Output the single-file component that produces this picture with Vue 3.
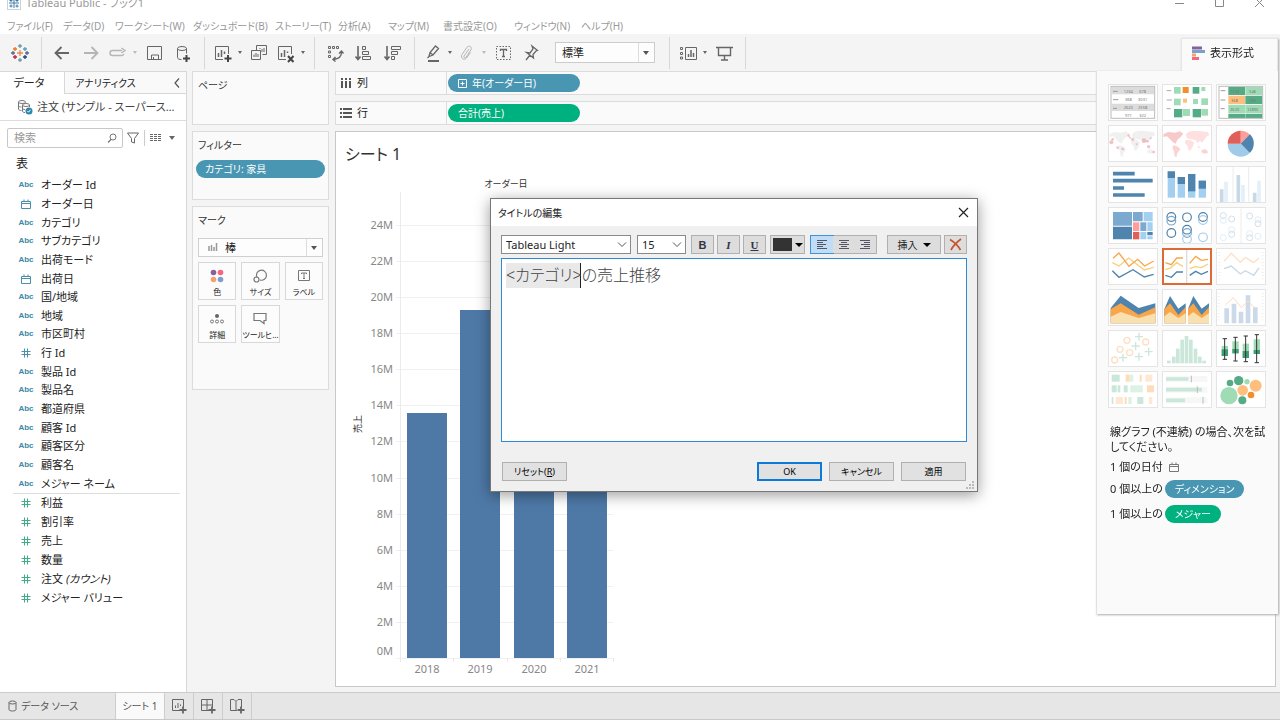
<script setup>
import { ref } from 'vue'

const menus = ['ファイル(F)', 'データ(D)', 'ワークシート(W)', 'ダッシュボード(B)', 'ストーリー(T)', '分析(A)', 'マップ(M)', '書式設定(O)', 'ウィンドウ(N)', 'ヘルプ(H)']

const dimensions = [
  ['abc', 'オーダー Id'], ['date', 'オーダー日'], ['abc', 'カテゴリ'], ['abc', 'サブカテゴリ'],
  ['abc', '出荷モード'], ['date', '出荷日'], ['abc', '国/地域'], ['abc', '地域'],
  ['abc', '市区町村'], ['num', '行 Id'], ['abc', '製品 Id'], ['abc', '製品名'],
  ['abc', '都道府県'], ['abc', '顧客 Id'], ['abc', '顧客区分'], ['abc', '顧客名'], ['abc', 'メジャー ネーム']
]
const measures = ['利益', '割引率', '売上', '数量', '注文 ', 'メジャー バリュー']

const sales = [
  { year: 2018, value: 13.6 },
  { year: 2019, value: 19.3 },
  { year: 2020, value: 19.6 },
  { year: 2021, value: 22.4 }
]
const baseY = 482
const perMillion = 18.05
const yOf = (m) => Math.round(baseY - m * perMillion)
const ticks = Array.from({ length: 13 }, (_, i) => i * 2)
const barX = (i) => Math.round(71 + i * 53.4)

const titleText = ref('<カテゴリ>の売上推移')

const tableRows = [['1234', '678'], ['368', '3031'], ['2620', '2558'], ['971', '322']]
const heatRows = [['1234', '546'], ['368', '385'], ['2620', '12890']]
const squares = [
  [36, 9, 20, 'l'], [62, 9, 18, 'o'], [92, 9, 20, 'd'], [118, 9, 12, 'l'],
  [36, 44, 20, 'l'], [63, 44, 12, 'p'], [93, 45, 15, 'l'], [118, 43, 20, 'l'],
  [36, 75, 25, 'd'], [63, 75, 21, 'l'], [92, 75, 25, 'd'], [118, 75, 20, 'l']
]
const green = { l: '#9fdbb5', d: '#56ab87', o: '#f28e2b', p: '#ffbe7d' }
const mapDots = [[10, 52, 6], [14, 43, 4], [29, 68, 4], [44, 72, 4], [62, 32, 4], [66, 38, 3], [74, 43, 5], [86, 58, 3], [108, 47, 7], [118, 49, 4], [122, 65, 5], [128, 40, 3], [137, 81, 4]]
const stacked = [[17, 16, 36], [47, 33, 54], [78, 24, 76], [110, 44, 68]]
const circles = [[28, 30, 'd'], [28, 41, 'm'], [75, 31, 'd'], [123, 30, 'd'], [123, 39, 'l'], [28, 78, 'd'], [75, 68, 'd'], [75, 78, 'm'], [75, 96, 'l'], [123, 91, 'l']]
const blue = { d: '#4e7fa6', m: '#7ba6cc', l: '#a3cdea' }
const paleCircles = [[22, 26], [22, 40], [47, 36], [47, 68], [47, 82], [22, 92], [101, 27], [126, 38], [126, 50], [101, 80], [101, 92], [126, 88]]
const histogram = [[15, 92], [30, 80], [42, 56], [55, 29], [68, 18], [81, 29], [95, 56], [108, 80], [121, 92]]
const boxes = [[26, 48, 58, 78, 26, 88], [58, 34, 57, 70, 22, 93], [89, 41, 63, 84, 18, 95], [122, 28, 60, 72, 14, 98]]
const gantt = [
  [11, 11, 24, 'g'], [53, 11, 12, 'o'], [66, 11, 10, 'e'], [95, 11, 6, 'o'], [112, 11, 21, 'p'],
  [11, 43, 15, 'g'], [29, 43, 8, 'g'], [47, 43, 12, 'g'], [67, 43, 37, 'e'], [117, 43, 21, 'o'],
  [11, 78, 5, 'g'], [23, 78, 22, 'p'], [50, 78, 6, 'o'], [61, 78, 10, 'e'], [88, 78, 18, 'g'], [123, 78, 10, 'p']
]
const pale = { g: '#cbe7da', e: '#dcf2e4', o: '#ffdcb8', p: '#ffe8d2' }
const bubbles = [[39, 74, 26, '#9fdbb5'], [42, 36, 10, '#56ab87'], [68, 29, 14, '#56ab87'], [93, 32, 8, '#9fdbb5'], [119, 44, 18, '#ffbe7d'], [80, 58, 16, '#ffbe7d'], [105, 72, 10, '#f28e2b'], [79, 88, 12, '#56ab87']]
const crosses = [[93, 20], [83, 48], [122, 65], [45, 83], [93, 80]]
const rings = [[57, 31], [113, 36], [36, 58], [65, 68], [20, 90]]
const logoPluses = [[12, 12, 3, '#eb8a44'], [12, 5, 2, '#7099a6'], [12, 19, 2, '#7199a6'], [5, 12, 2, '#5b6591'], [19, 12, 2, '#5b6591'], [7, 8, 2, '#e8762d'], [17, 8, 2, '#5c9dbd'], [7, 16, 2, '#c72035'], [17, 16, 2, '#1f457e']]
</script>

<template>
  <div class="window">
    <header class="titlebar">
      <div class="title-row">
        <svg class="app-icon" width="14" height="14" viewBox="0 0 14 14"><rect x=".5" y=".5" width="13" height="13" fill="#fff" stroke="#c9d3dc" /><path d="M7 2v10M2 7h10M4 3v3M10 3v3M4 8.500v3M10 8.500v3M2.500 4.500h3M8.500 4.500h3M2.500 10h3M8.500 10h3" stroke="#3f7aa8" /></svg>
        <span class="app-title">Tableau Public - ブック1</span>
        <span class="win-controls">
          <button aria-label="最小化"><svg width="12" height="12" viewBox="0 0 12 12"><path d="M1 6.500h9" /></svg></button>
          <button aria-label="最大化"><svg width="12" height="12" viewBox="0 0 12 12"><path d="M1.500 1.500h8v8h-8z" /></svg></button>
          <button aria-label="閉じる"><svg width="12" height="12" viewBox="0 0 12 12"><path d="M1 1l9 9M10 1l-9 9" /></svg></button>
        </span>
      </div>
    </header>

    <nav class="menu">
      <button v-for="m in menus" :key="m">{{ m }}</button>
    </nav>

    <div class="toolbar">
      <div class="group first">
        <button aria-label="Tableau">
          <svg width="24" height="24" viewBox="0 0 24 24"><path v-for="(p, i) in logoPluses" :key="i" :d="`M${p[0] - p[2]} ${p[1]}h${p[2] * 2}M${p[0]} ${p[1] - p[2]}v${p[2] * 2}`" :stroke="p[3]" stroke-width="1.300" /></svg>
        </button>
      </div>
      <div class="group">
        <button aria-label="元に戻す"><svg width="24" height="24" viewBox="0 0 24 24"><path d="M5.500 12H19M11.500 6l-6 6 6 6" stroke-width="1.800" /></svg></button>
        <button aria-label="やり直し" class="off"><svg width="24" height="24" viewBox="0 0 24 24"><path d="M5 12h13.500M12.500 6l6 6-6 6" stroke-width="1.800" /></svg></button>
        <button aria-label="再実行" class="split off"><svg width="20" height="24" viewBox="0 0 20 24"><path d="M14 9.500H4.500a2.500 2.500 0 0 0 0 5H13a3 3 0 0 0 3-1.500M13.500 7l3.500 2.500-3.500 2.500" stroke-width="1.400" /></svg><i class="caret"></i></button>
        <button aria-label="保存"><svg width="24" height="24" viewBox="0 0 24 24"><path d="M5.500 5.500h14v13h-14zM9.500 18v-4h7v4M11.500 18v-2" /></svg></button>
        <button aria-label="新しいデータ ソース"><svg width="24" height="24" viewBox="0 0 24 24"><path d="M6.500 7.500v9c0 1.500 2 2 4 2M15.500 7.500v5" /><ellipse cx="11" cy="7.500" rx="4.500" ry="2" /><path d="M15.500 14v7M12 17.500h7" stroke="#444" stroke-width="2" /></svg></button>
      </div>
      <div class="group">
        <button aria-label="新しいワークシート" class="split"><svg width="20" height="24" viewBox="0 0 20 24"><path d="M10 18.500H2.500v-13h13V13" /><path d="M5.500 16v-4M8.500 16V9M11.500 13v-2.500" stroke-width="1.500" /><path d="M15 14v7M11.500 17.500h7" stroke="#444" stroke-width="2" /></svg><i class="caret"></i></button>
        <button aria-label="複製"><svg width="24" height="24" viewBox="0 0 24 24"><path d="M9.500 9.500v-5h10v9h-4M4.500 9.500h9v9h-9z" /><path d="M7 16v-2.500M9 16v-4M11 16v-3M13 8V7M15 11V8M17 11V7" /></svg></button>
        <button aria-label="シートのクリア" class="split"><svg width="20" height="24" viewBox="0 0 20 24"><path d="M10 18.500H2.500v-13h13V13" /><path d="M5.500 16v-4M8.500 16V9M11.500 12v-1.500" stroke-width="1.500" /><path d="M12 15l5.500 6M17.500 15L12 21" stroke="#444" stroke-width="2" /></svg><i class="caret"></i></button>
      </div>
      <div class="group">
        <button aria-label="行と列の交換"><svg width="24" height="24" viewBox="0 0 24 24"><path d="M5.500 5.500h2v2h-2zM9.500 5.500h2v2h-2zM13.500 5.500h2v2h-2zM5.500 10h2v2h-2zM5.500 14.500h2v2h-2z" /><path d="M18.500 11c0 4-3 7-8 7.500M16 12.500l2.500-2.500 2 2.500M12.500 16l-2.500 2.500 2.500 2" stroke-width="1.400" /></svg></button>
        <button aria-label="昇順に並べ替え"><svg width="24" height="24" viewBox="0 0 24 24"><path d="M6 5v13M3.500 15.500L6 18.500l2.500-3" stroke-width="1.600" /><path d="M10.500 5.500h3v3h-3zM10.500 10.500h6v3h-6zM10.500 15.500h8v3h-8z" /></svg></button>
        <button aria-label="降順に並べ替え"><svg width="24" height="24" viewBox="0 0 24 24"><path d="M6 5v13M3.500 15.500L6 18.500l2.500-3" stroke-width="1.600" /><path d="M10.500 5.500h9v3h-9zM10.500 10.500h6v3h-6zM10.500 15.500h3v3h-3z" /></svg></button>
      </div>
      <div class="group">
        <button aria-label="ハイライト" class="split"><svg width="20" height="24" viewBox="0 0 20 24"><path d="M6 15.500l1-4 5.500-6.500 3 2.500-5.500 6.500zM6 15.500l-1.500 1.500M7 11.500l3 2.500" stroke-width="1.300" /><path d="M5 20h11" stroke-width="2" /></svg><i class="caret"></i></button>
        <button aria-label="メンバーのグループ化" class="split off"><svg width="20" height="24" viewBox="0 0 20 24"><path d="M12 8l-5 7c-.8 1.500 1 2.700 2 1.300l5-7.500c1.500-3-2-5-4-2.500L5 13.500c-2 3.500 2 6.500 4.500 3.500l4-5.500" /></svg><i class="caret"></i></button>
        <button aria-label="マーク ラベルの表示"><svg width="24" height="24" viewBox="0 0 24 24"><path d="M5.500 5.500h14v13h-14z" stroke-dasharray="1.500 1.500" /><path d="M9.500 10V8.500h6V10M12.500 8.500v7M11 15.500h3" stroke-width="1.300" /></svg></button>
        <button aria-label="軸の固定"><svg width="24" height="24" viewBox="0 0 24 24"><path d="M12 5l5.500 4.500-1.500.5-3 3.500.5 3.500L6.500 11.500l3.500.500 3-4zM10 14L6 19" stroke-width="1.300" /></svg></button>
        <select class="fit" aria-label="表示サイズ"><option>標準</option></select>
      </div>
      <div class="group">
        <button aria-label="カードの表示" class="split"><svg width="20" height="24" viewBox="0 0 20 24"><path d="M2.500 6.500h2v2h-2zM2.500 11.500h2v2h-2zM2.500 16h2v2h-2zM7.500 6.500h11v12h-11z" /><path d="M10.500 16v-3M13 16V9M15.500 16v-4" stroke-width="1.500" /></svg><i class="caret"></i></button>
        <button aria-label="プレゼンテーション モード"><svg width="24" height="24" viewBox="0 0 24 24"><path d="M4 6.500h17M6.500 6.500v8h12v-8M12.500 14.500V19M9 19h7" stroke-width="1.400" /></svg></button>
      </div>
    </div>

    <main class="body">
      <aside class="data-pane">
        <div class="pane-tabs">
          <button class="active">データ</button>
          <button class="analytics">アナリティクス</button>
          <button class="collapse" aria-label="折りたたむ"><svg width="8" height="12" viewBox="0 0 8 12"><path d="M6 1.500L2 6l4 4.500" fill="none" stroke="#555" stroke-width="1.200" /></svg></button>
        </div>
        <div class="source">
          <svg width="16" height="16" viewBox="0 0 16 16" fill="none" stroke="#777"><ellipse cx="5" cy="3" rx="3.500" ry="1.500" /><path d="M1.500 3v7c0 1 1.500 1.500 3 1.500M1.500 6.500c0 1 1.500 1.500 3 1.500" /><ellipse cx="9" cy="6" rx="3.500" ry="1.500" /><path d="M5.500 6v6c0 1 1 1.500 2.500 1.500M5.500 9c0 1 1 1.500 2.500 1.500M12.500 6v2" /><circle cx="12" cy="12" r="3.500" fill="#2e86ab" stroke="none" /><path d="M10.500 12l1 1.200 2-2.400" stroke="#fff" /></svg>
          <span>注文 (サンプル - スーパース…</span>
        </div>
        <div class="search-row">
          <label class="search">
            <input type="text" placeholder="検索" aria-label="検索" />
            <svg width="12" height="12" viewBox="0 0 12 12"><circle cx="7" cy="5" r="3" fill="none" stroke="#777" /><path d="M5 7.500L2 10.500" stroke="#777" stroke-width="1.300" /></svg>
          </label>
          <button aria-label="フィルター"><svg width="12" height="12" viewBox="0 0 12 12"><path d="M.5 1h11L7.500 6.500V11l-3-1V6.500z" fill="none" stroke="#666" /></svg></button>
          <span class="divider"></span>
          <button class="list-btn" aria-label="表示オプション"><svg width="12" height="10" viewBox="0 0 12 10"><path d="M0 1.500h12M0 3.500h12M0 5.500h12M0 7.500h12" stroke="#666" stroke-dasharray="3 1" /></svg><i class="caret big"></i></button>
        </div>
        <h2>表</h2>
        <ul class="fields dims">
          <li v-for="f in dimensions" :key="f[1]">
            <span class="type">
              <b v-if="f[0] === 'abc'">Abc</b>
              <svg v-else-if="f[0] === 'date'" width="10" height="10" viewBox="0 0 10 10"><path d="M.5 2.500h9v7h-9zM.5 4.500h9M3 .5v2M7 .5v2" fill="none" stroke="#4a90ab" /></svg>
              <svg v-else width="10" height="10" viewBox="0 0 10 10"><path d="M3.500 .5v9M6.500 .5v9M.5 3.500h9M.5 6.500h9" stroke="#4a90ab" /></svg>
            </span>{{ f[1] }}
          </li>
        </ul>
        <ul class="fields meas">
          <li v-for="(f, i) in measures" :key="f">
            <span class="type"><svg width="10" height="10" viewBox="0 0 10 10"><path d="M3.500 .5v9M6.500 .5v9M.5 3.500h9M.5 6.500h9" stroke="#3fae85" /></svg></span><span>{{ f }}<em v-if="i === 4">(カウント)</em></span>
          </li>
        </ul>
      </aside>

      <section class="cards">
        <div class="card pages"><h3>ページ</h3></div>
        <div class="card filters">
          <h3>フィルター</h3>
          <div class="pill dim">カテゴリ: 家具</div>
        </div>
        <div class="card marks">
          <h3>マーク</h3>
          <div class="mark-type">
            <svg width="10" height="10" viewBox="0 0 10 10"><path d="M1 9V4M3.500 9V3M6 9V5M8.500 9V1" stroke="#999" stroke-width="1.500" /></svg>
            <select aria-label="マーク タイプ"><option>棒</option></select>
          </div>
          <div class="mark-grid">
            <button><svg width="16" height="16" viewBox="0 0 16 16"><circle cx="4.500" cy="4.500" r="2.800" fill="#85639a" /><circle cx="11.500" cy="4.500" r="2.800" fill="#f7647b" /><circle cx="4.500" cy="11.500" r="2.800" fill="#f4a26b" /><circle cx="11.500" cy="11.500" r="2.800" fill="#7aa0cf" /></svg>色</button>
            <button><svg width="16" height="16" viewBox="0 0 16 16" fill="none" stroke="#777"><path d="M5 9.500A5 5 0 1 1 8 12" stroke-width="1.200" /><circle cx="4.500" cy="11.500" r="2.500" stroke-width="1.200" /></svg>サイズ</button>
            <button><svg width="16" height="16" viewBox="0 0 16 16" fill="none" stroke="#777"><path d="M2.500 2.500h11v10h-11z" /><path d="M5.500 6V5h5v1M8 5v5.500M7 10.500h2" /></svg>ラベル</button>
            <button><svg width="16" height="16" viewBox="0 0 16 16" fill="none" stroke="#777"><circle cx="8" cy="5" r="2" fill="#666" stroke="none" /><circle cx="3" cy="10.500" r="1.500" /><circle cx="8" cy="10.500" r="1.500" /><circle cx="13" cy="10.500" r="1.500" /></svg>詳細</button>
            <button><svg width="16" height="16" viewBox="0 0 16 16" fill="none" stroke="#777"><path d="M2 2.500h12v7h-2v3l-4-3H2z" stroke-width="1.200" /></svg>ツールヒ…</button>
          </div>
        </div>
      </section>

      <section class="stage">
        <div class="shelf">
          <div class="shelf-label"><svg width="12" height="10" viewBox="0 0 12 10"><path d="M2 3v7M6 3v7M10 3v7M2 0v2M6 0v2M10 0v2" stroke="#555" stroke-width="2" /></svg>列</div>
          <div class="pill dim"><svg width="9" height="9" viewBox="0 0 9 9"><path d="M.5.5h8v8h-8zM2.500 4.500h4M4.500 2.500v4" fill="none" stroke="#fff" /></svg>年(オーダー日)</div>
        </div>
        <div class="shelf">
          <div class="shelf-label"><svg width="12" height="10" viewBox="0 0 12 10"><path d="M0 1h2M3 1h9M0 5h2M3 5h9M0 9h2M3 9h9" stroke="#555" stroke-width="1.800" /></svg>行</div>
          <div class="pill mea">合計(売上)</div>
        </div>
        <div class="view">
          <h1>シート 1</h1>
          <svg class="chart" width="290" height="510" viewBox="0 0 290 510">
            <text class="head" x="170" y="11" text-anchor="middle">オーダー日</text>
            <text class="head" transform="translate(25 248) rotate(-90)" text-anchor="middle">売上</text>
            <g v-for="t in ticks" :key="t">
              <path :d="`M60 ${yOf(t)}.5H277`" stroke="#f0f0f0" />
              <text x="57" :y="t === 0 ? 479 : yOf(t) + 4" text-anchor="end">{{ t }}M</text>
            </g>
            <path d="M64.500 16v470M117.500 482v4M171.500 482v4M224.500 482v4M277.500 482v4" stroke="#ebebeb" />
            <g v-for="(s, i) in sales" :key="s.year">
              <rect :x="barX(i)" :y="yOf(s.value)" width="40" :height="baseY - yOf(s.value)" fill="#4e79a7" />
              <text :x="barX(i) + 20" y="497" text-anchor="middle">{{ s.year }}</text>
            </g>
          </svg>
        </div>
      </section>
    </main>

    <footer class="sheet-tabs">
      <button class="source-tab"><svg width="9" height="12" viewBox="0 0 9 12" fill="none" stroke="#666"><ellipse cx="4.500" cy="2.500" rx="3.500" ry="1.500" /><path d="M1 2.500v7c0 2 7 2 7 0v-7" /></svg>データ ソース</button>
      <button class="sheet active">シート 1</button>
      <button class="new" aria-label="新しいワークシート"><svg width="16" height="16" viewBox="0 0 16 16"><path d="M9 12.500H1.500v-11h11V9M4.500 10V7.500M7 10V5M9.500 8V6.500" /><path d="M12 8.500v7M8.500 12h7" stroke-width="1.800" /></svg></button>
      <button class="new" aria-label="新しいダッシュボード"><svg width="16" height="16" viewBox="0 0 16 16"><path d="M9 12.500H1.500v-11h11V9M7 1.500v11M1.500 7h11" /><path d="M12 8.500v7M8.500 12h7" stroke-width="1.800" /></svg></button>
      <button class="new" aria-label="新しいストーリー"><svg width="16" height="16" viewBox="0 0 16 16"><path d="M8 12.500H1.500v-11H5l2 2 2-2h3.500V9M7 3.500v9" /><path d="M12 8.500v7M8.500 12h7" stroke-width="1.800" /></svg></button>
    </footer>

    <aside class="showme">
      <button class="showme-tab">
        <svg width="13" height="14" viewBox="0 0 13 14"><path d="M0 2h10" stroke="#85639a" stroke-width="3" /><path d="M0 5.500h13" stroke="#7aa0cf" stroke-width="3" /><path d="M0 9h4" stroke="#f4a26b" stroke-width="3" /><path d="M0 12.500h7" stroke="#f7647b" stroke-width="3" /></svg>
        表示形式
      </button>
      <div class="showme-body">
        <div class="thumbs">
          <button aria-label="テキスト表"><svg viewBox="0 0 150 111"><rect x="9" y="7" width="131" height="96" fill="#fff" stroke="#bbb" stroke-width="3" /><path d="M11 20h127M11 70h127" stroke="#dcdcdc" stroke-width="22" /><path d="M15 22h14M15 47h16M15 73h12" stroke="#999" stroke-width="3" /><g v-for="(r, i) in tableRows" :key="i" class="tiny"><text x="61" :y="26 + i * 24">{{ r[0] }}</text><text x="104" :y="26 + i * 24">{{ r[1] }}</text></g></svg></button>
          <button aria-label="ヒート マップ"><svg viewBox="0 0 150 111"><path d="M14 20h14M14 48h16M14 74h12" stroke="#aaa" stroke-width="3" /><rect v-for="(s, i) in squares" :key="i" :x="s[0]" :y="s[1]" :width="s[2]" :height="s[2]" :fill="green[s[3]]" /></svg></button>
          <button aria-label="ハイライト表"><svg viewBox="0 0 150 111"><path d="M37 8h50v25h-50zM88 35h50v25h-50zM37 89h50v13h-50zM88 89h50v13h-50z" fill="#56ab87" /><path d="M88 8h50v25h-50zM37 62h50v25h-50zM88 62h50v25h-50z" fill="#9fdbb5" /><path d="M37 35h50v25h-50z" fill="#ffbe7d" /><rect x="9" y="7" width="131" height="96" fill="none" stroke="#bbb" stroke-width="3" /><path d="M14 20h14M14 48h14M14 74h12" stroke="#999" stroke-width="3" /><g v-for="(r, i) in heatRows" :key="i" class="tiny"><text x="56" :y="26 + i * 27">{{ r[0] }}</text><text x="110" :y="26 + i * 27">{{ r[1] }}</text></g></svg></button>
          <button aria-label="記号マップ"><svg viewBox="0 0 150 111"><path d="M4 28l14-7 22 2 14-4 10 7-8 10-10 8-5 12-9-5-9-10-8-7-10 2zM34 60l14 5 7 8-9 12-3 12-5-4-2-14-5-10zM72 28l8-8 16-3 22 2 20 3 4 8-9 5-6 10-8 8-5-6-7 8-6-9-10-3-9-1-8-4zM70 46l16-1 10 8-4 12-7 12-6-2-2-12-8-8zM118 76l12-4 9 10-8 4-12-3z" fill="#f0f0f0" /><circle v-for="(d, i) in mapDots" :key="i" :cx="d[0]" :cy="d[1]" :r="d[2]" fill="#e8a3a8" fill-opacity=".65" /></svg></button>
          <button aria-label="マップ"><svg viewBox="0 0 150 111"><path d="M4 28l14-7 22 2 14-4 10 7-8 10-10 8-5 12-9-5-9-10-8-7-10 2z" fill="#f7c9c9" /><path d="M72 28l8-8 16-3 22 2 20 3 4 8-9 5-6 10-8 8-5-6-7 8-6-9-10-3-9-1-8-4zM70 46l16-1 10 8-4 12-7 12-6-2-2-12-8-8z" fill="#fde0df" /><path d="M34 60l14 5 7 8-9 12-3 12-5-4-2-14-5-10zM118 76l12-4 9 10-8 4-12-3zM105 62l10 5-5 2z" fill="#fad4d3" /></svg></button>
          <button aria-label="円グラフ"><svg viewBox="0 0 150 111"><path d="M74 56V17A39 39 0 0 1 102 29z" fill="#ff9d9a" /><path d="M74 56L102 28A39 39 0 0 1 101 84z" fill="#4e84ad" /><path d="M74 56L101 84A39 39 0 0 1 35 56z" fill="#a0cbe8" /><path d="M74 56H35A39 39 0 0 1 74 17z" fill="#e15f59" /></svg></button>
          <button aria-label="横棒"><svg viewBox="0 0 150 111"><path d="M15 23h65M15 44h119M15 66h33M15 87h95" stroke="#4e84ad" stroke-width="11" /></svg></button>
          <button aria-label="積み上げ棒"><svg viewBox="0 0 150 111"><g v-for="(s, i) in stacked" :key="i"><rect :x="s[0]" :y="s[1]" width="22" :height="95 - s[1]" fill="#a3cff0" /><rect :x="s[0]" :y="s[1]" width="22" :height="s[2] - s[1]" fill="#4e84ad" /></g></svg></button>
          <button aria-label="並列棒"><svg viewBox="0 0 150 111"><path d="M51 3v106M98 3v106" stroke="#ececec" stroke-width="3" /><path d="M17 108V70M67 108V27M116 108V80" stroke="#c9d8e5" stroke-width="11" /><path d="M30 108V47M81 108V57M129 108V44" stroke="#e3f0fa" stroke-width="11" /></svg></button>
          <button aria-label="ツリーマップ"><svg viewBox="0 0 150 111"><path d="M15 15h57v41H15zM75 15h29v28H75z" fill="#7ba9d0" /><path d="M15 59h57v38H15zM118 75h16v10h-16z" fill="#4e84ad" /><path d="M107 15h27v28h-27zM97 75h18v22H97zM118 88h16v9h-16zM118 46h16v26h-16z" fill="#a3cff0" /><path d="M97 46h18v26H97z" fill="#7ba9d0" /><path d="M75 46h19v26H75z" fill="#ff9d9a" /><path d="M75 75h19v22H75z" fill="#e15f59" /></svg></button>
          <button aria-label="円ビュー"><svg viewBox="0 0 150 111"><circle v-for="(c, i) in circles" :key="i" :cx="c[0]" :cy="c[1]" r="13" fill="none" :stroke="blue[c[2]]" stroke-width="3.500" /></svg></button>
          <button aria-label="並列円"><svg viewBox="0 0 150 111"><path d="M75 4v104" stroke="#ececec" stroke-width="3" /><circle v-for="(c, i) in paleCircles" :key="i" :cx="c[0]" :cy="c[1]" r="9" fill="none" :stroke="i % 2 ? '#e0eefa' : '#d3e0ea'" stroke-width="3" /></svg></button>
          <button aria-label="線グラフ (連続)"><svg viewBox="0 0 150 111" class="line"><path d="M13 44l20 10 29-24 47 36 28-8" stroke="#f7d078" /><path d="M15 31l18-16 30 40 26-21 21 20 27-15" stroke="#f9a64a" /><path d="M13 68l20 20 42-23 34 22 28-8" stroke="#4e84ad" /></svg></button>
          <button aria-label="線グラフ (不連続)" class="selected"><svg viewBox="0 0 150 111" class="line"><path d="M74 4v104" stroke="#dcdcdc" /><path d="M10 65l16-5 18-16 19 12M83 62l18-6 17 3 20-11" stroke="#f7d078" /><path d="M10 44l18 6 16-20h19M83 46l18-21 17 12 20-3" stroke="#f9a64a" /><path d="M10 82l18 6 16-16h19M83 82l18-12 17 9 20-9" stroke="#4e84ad" /></svg></button>
          <button aria-label="二重線"><svg viewBox="0 0 150 111" class="line"><path d="M10 12v90M140 12v90" stroke="#e8e8e8" stroke-width="6" stroke-dasharray="2 8" /><path d="M24 40l22-24 27 27 15-15 25 16 16-14" stroke="#fde0c5" /><path d="M24 62l22-8 27 24 15-10 25 14 16-22" stroke="#c9d8e5" /></svg></button>
          <button aria-label="面グラフ (連続)"><svg viewBox="0 0 150 111"><path d="M8 57l30-37 54 37 50-14v60H8z" fill="#4e84ad" /><path d="M8 60l30-17 54 34 50-22v48H8z" fill="#f9a64a" /><path d="M8 83l30-14 54 18 50-14v30H8z" fill="#f9e0b0" /></svg></button>
          <button aria-label="面グラフ (不連続)"><svg viewBox="0 0 150 111"><path d="M7 60l17-39 25 38 22-16v60H7zM78 60l16-39 25 38 22-16v60H78z" fill="#4e84ad" /><path d="M7 60l17-17 25 35 22-24v49H7zM78 60l16-17 25 35 22-24v49H78z" fill="#f9a64a" /><path d="M7 82l17-13 25 18 22-14v30H7zM78 82l16-13 25 18 22-14v30H78z" fill="#f9e0b0" /></svg></button>
          <button aria-label="二重組み合わせ"><svg viewBox="0 0 150 111"><path d="M140 12v90M8 12v90" stroke="#e8e8e8" stroke-width="6" stroke-dasharray="2 8" /><path d="M32 103V58M54 103V44M75 103V68M96 103V19M118 103V55" stroke="#ccd9e8" stroke-width="14" /><path d="M28 48l24-22 24 30 20-20 22 22" fill="none" stroke="#fbdcc0" stroke-width="3" /></svg></button>
          <button aria-label="散布図"><svg viewBox="0 0 150 111" class="line"><path v-for="(c, i) in crosses" :key="i" :d="`M${c[0] - 12} ${c[1]}h24M${c[0]} ${c[1] - 12}v24`" stroke="#cbe7da" /><circle v-for="(c, i) in rings" :key="'r' + i" :cx="c[0]" :cy="c[1]" r="9" stroke="#ffdfc4" /></svg></button>
          <button aria-label="ヒストグラム"><svg viewBox="0 0 150 111"><rect v-for="h in histogram" :key="h[0]" :x="h[0]" :y="h[1]" width="11" :height="100 - h[1]" fill="#cbe7da" /></svg></button>
          <button aria-label="箱ひげ図"><svg viewBox="0 0 150 111"><g v-for="b in boxes" :key="b[0]"><rect :x="b[0] - 9" :y="b[1]" width="19" :height="b[3] - b[1]" fill="#9fdbb5" /><rect :x="b[0] - 9" :y="b[2]" width="19" :height="b[3] - b[2]" fill="#3f9c74" /><path :d="`M${b[0]} ${b[4]}V${b[5]}M${b[0] - 6} ${b[4]}h13M${b[0] - 6} ${b[5]}h13`" stroke="#333" stroke-width="3" /></g></svg></button>
          <button aria-label="ガント"><svg viewBox="0 0 150 111"><rect v-for="(g, i) in gantt" :key="i" :x="g[0]" :y="g[1]" :width="g[2]" height="21" :fill="pale[g[3]]" /></svg></button>
          <button aria-label="ブレット グラフ"><svg viewBox="0 0 150 111"><path d="M12 24h124M12 56h124M12 88h124" stroke="#f7f7f7" stroke-width="18" /><path d="M12 24h67M12 56h108M12 88h57" stroke="#cbe7da" stroke-width="11" /><path d="M88 14v20M106 46v20M123 78v20" stroke="#bbb" stroke-width="3" /></svg></button>
          <button aria-label="パック バブル"><svg viewBox="0 0 150 111"><circle v-for="(b, i) in bubbles" :key="i" :cx="b[0]" :cy="b[1]" :r="b[2]" :fill="b[3]" /></svg></button>
        </div>
        <p class="hint">線グラフ (不連続) の場合、次を試<br />してください。</p>
        <p class="need">1 個の日付 <svg width="10" height="10" viewBox="0 0 10 10"><path d="M.5 2.500h9v7h-9zM.5 4.500h9M3 .5v2M7 .5v2" fill="none" stroke="#777" /></svg></p>
        <p class="need">0 個以上の <span class="pill dim">ディメンション</span></p>
        <p class="need">1 個以上の <span class="pill mea">メジャー</span></p>
      </div>
    </aside>

    <div class="dialog" role="dialog" aria-labelledby="dlg-title">
      <header>
        <span id="dlg-title">タイトルの編集</span>
        <button aria-label="閉じる"><svg width="11" height="11" viewBox="0 0 11 11"><path d="M1 1l9 9M10 1l-9 9" stroke="#222" stroke-width="1.200" /></svg></button>
      </header>
      <div class="dialog-body">
        <div class="format">
          <select class="font" aria-label="フォント"><option>Tableau Light</option></select>
          <select class="size" aria-label="サイズ"><option>15</option></select>
          <button class="sq"><b>B</b></button>
          <button class="sq"><b><i>I</i></b></button>
          <button class="sq"><b><u>U</u></b></button>
          <button class="color" aria-label="文字の色"><span class="swatch"></span><i class="caret dark"></i></button>
          <span class="aligns">
            <button class="on" aria-label="左揃え"><svg width="10" height="9" viewBox="0 0 10 9"><path d="M0 .5h10M0 2.500h6M0 4.500h9M0 6.500h6M0 8.500h10" /></svg></button>
            <button aria-label="中央揃え"><svg width="10" height="9" viewBox="0 0 10 9"><path d="M0 .5h10M2 2.500h6M0 4.500h10M2 6.500h6M0 8.500h10" /></svg></button>
            <button aria-label="右揃え"><svg width="10" height="9" viewBox="0 0 10 9"><path d="M0 .5h10M4 2.500h6M1 4.500h9M4 6.500h6M0 8.500h10" /></svg></button>
          </span>
          <button class="insert">挿入<i class="caret dark"></i></button>
          <button class="sq" aria-label="クリア"><svg width="13" height="13" viewBox="0 0 13 13"><path d="M1 1.500c4 2.500 8 6 10.500 10.500M12 1C8 4 4 8 2 12" fill="none" stroke="#c4562f" stroke-width="1.700" /></svg></button>
        </div>
        <div class="editor">
          <span class="token"></span>
          <textarea v-model="titleText" aria-label="タイトル" spellcheck="false"></textarea>
        </div>
        <div class="actions">
          <button class="reset">リセット(<u>R</u>)</button>
          <button class="ok">OK</button>
          <button>キャンセル</button>
          <button>適用</button>
        </div>
      </div>
      <svg class="grip" width="8" height="8" viewBox="0 0 8 8"><path d="M6 0h2v2H6zM6 3h2v2H6zM6 6h2v2H6zM3 3h2v2H3zM3 6h2v2H3zM0 6h2v2H0z" fill="#bbb" /></svg>
    </div>
  </div>
</template>

<style>
body {
  margin: 0;
  background: #fff;
}
</style>

<style scoped>
* {
  box-sizing: border-box;
}
.window {
  position: relative;
  display: flex;
  flex-direction: column;
  min-height: 100vh;
  overflow: hidden;
  padding-bottom: 1px;
  font-family: "Noto Sans", "Noto Sans CJK JP", sans-serif;
  font-size: 11px;
  line-height: 16px;
  font-feature-settings: "palt";
  color: #222;
  background: #fff;
}
button,
select,
input,
textarea {
  margin: 0;
  padding: 0;
  border: 0;
  background: none;
  font: inherit;
  font-feature-settings: inherit;
  color: inherit;
}
h1, h2, h3, p, ul {
  margin: 0;
  padding: 0;
  font-weight: 400;
  list-style: none;
}
svg {
  display: block;
  flex: none;
}
select {
  appearance: none;
}

.titlebar {
  height: 15px;
}
.title-row {
  display: flex;
  align-items: center;
  height: 5px;
  padding: 0 14px 0 7px;
  color: #999;
}
.app-title {
  margin-left: 5px;
}
.win-controls {
  display: flex;
  gap: 28px;
  margin-left: auto;
}
.win-controls svg {
  fill: none;
  stroke: #888;
}

.menu {
  display: grid;
  grid-template-columns: 56px 52px 78px 82px 63px 50px 55px 71px 67px auto;
  height: 19px;
  align-items: center;
  padding: 2px 0 0 7px;
  font-size: 10px;
  color: #999;
}
.menu button {
  text-align: left;
  white-space: nowrap;
}

.toolbar {
  display: flex;
  align-items: center;
  height: 37px;
  background: #f4f4f4;
}
.group {
  display: flex;
  align-items: center;
  gap: 5px;
  height: 32px;
  padding: 0 9px 0 8px;
  border-right: 1px solid #d8d8d8;
}
.group svg {
  fill: none;
  stroke: #666;
}
.group .off svg {
  stroke: #b5b5b5;
}
.split {
  display: flex;
  align-items: center;
}
.caret {
  width: 0;
  height: 0;
  margin-left: 5px;
  border: 2px solid transparent;
  border-top: 3px solid #666;
  border-bottom: 0;
}
.off .caret {
  border-top-color: #bbb;
}
.caret.big {
  border-width: 4px 3px 0;
}
.caret.dark {
  border-width: 4px 4px 0;
  border-top-color: #000;
}
.fit {
  width: 100px;
  height: 21px;
  margin: 0 5px 0 6px;
  padding-left: 6px;
  border: 1px solid #ccc;
}
.fit,
.mark-type select {
  background:
    url("data:image/svg+xml,%3Csvg xmlns='http://www.w3.org/2000/svg' width='16' height='4'%3E%3Cpath d='M5 0h6L8 4z' fill='%23555'/%3E%3C/svg%3E") right center no-repeat,
    linear-gradient(#ddd, #ddd) right 15px center / 1px 100% no-repeat,
    #fdfdfd;
}

.body {
  display: flex;
  flex: 1;
  background: #f4f4f4;
}
.data-pane {
  flex: none;
  width: 187px;
  border-right: 1px solid #d8d8d8;
  background: #fff;
}
.pane-tabs {
  display: flex;
  height: 23px;
  border-top: 1px solid #d8d8d8;
}
.pane-tabs button {
  background: #f9f9f9;
  border-bottom: 1px solid #d8d8d8;
}
.pane-tabs .active {
  width: 64px;
  padding-right: 6px;
  background: #fff;
  border-bottom: 0;
}
.pane-tabs .analytics {
  flex: 1;
  padding-left: 10px;
  font-size: 10px;
  text-align: left;
  border-left: 1px solid #d8d8d8;
}
.pane-tabs .collapse {
  padding-right: 5px;
}
.source {
  display: flex;
  align-items: center;
  gap: 4px;
  height: 27px;
  padding-left: 17px;
  border-bottom: 1px solid #ddd;
  white-space: nowrap;
  color: #444;
}
.search-row {
  display: flex;
  align-items: center;
  padding: 7px 11px 0 7px;
}
.search {
  display: flex;
  align-items: center;
  flex: 1;
  height: 20px;
  margin-right: 4px;
  padding: 0 4px 0 6px;
  border: 1px solid #c8c8c8;
  border-radius: 2px;
}
.search input {
  flex: 1;
  width: 0;
  outline: 0;
}
.search input::placeholder {
  color: #999;
}
.divider {
  width: 1px;
  height: 16px;
  margin: 0 5px;
  background: #ccc;
}
.list-btn {
  display: flex;
  align-items: center;
  gap: 2px;
}
h2 {
  padding: 8px 0 4px 16px;
  font-size: 12px;
}
.fields {
  display: grid;
  grid-auto-rows: 1fr;
  margin: 0 6px 0 13px;
}
.fields li {
  display: flex;
  align-items: center;
  white-space: pre;
}
.dims {
  height: 318px;
  border-bottom: 1px solid #ddd;
}
.meas {
  height: 113px;
}
.type {
  display: flex;
  justify-content: center;
  width: 26px;
  margin-right: 2px;
}
.type b {
  font-family: "Liberation Sans", Arial, sans-serif;
  font-size: 8px;
  color: #3d87a5;
}

.cards {
  display: flex;
  flex-direction: column;
  flex: none;
  gap: 6px;
  width: 137px;
  margin: 0 6px 0 5px;
}
.card {
  padding: 5px 3px 0;
  border: 1px solid #dcdcdc;
  background: #fafafa;
}
.card h3 {
  padding-left: 2px;
  font-size: 10px;
  color: #333;
}
.pages {
  height: 54px;
}
.filters {
  height: 69px;
}
.marks {
  height: 184px;
}
.pill {
  display: flex;
  align-items: center;
  gap: 5px;
  height: 18px;
  padding: 0 10px;
  border-radius: 9px;
  font-size: 10px;
  color: #fff;
  white-space: nowrap;
}
.dim {
  background: #4996b2;
}
.mea {
  background: #00b180;
}
.card .pill {
  margin-top: 7px;
  padding-left: 9px;
}
.mark-type {
  position: relative;
  margin: 10px 2px 0;
}
.mark-type svg {
  position: absolute;
  left: 10px;
  top: 4px;
}
.mark-type select {
  display: block;
  width: 100%;
  height: 19px;
  padding-left: 26px;
  border: 1px solid #d0d0d0;
}
.mark-grid {
  display: grid;
  grid-template-columns: repeat(3, 1fr);
  gap: 5px;
  margin: 5px 2px 0;
}
.mark-grid button {
  display: flex;
  flex-direction: column;
  align-items: center;
  justify-content: space-between;
  height: 38px;
  padding-top: 5px;
  border: 1px solid #d8d8d8;
  background: #fcfcfc;
  font-size: 8px;
  line-height: 14px;
  white-space: nowrap;
}

.stage {
  display: flex;
  flex-direction: column;
  flex: 1;
  gap: 6px;
  min-width: 0;
  margin: 0 4px 5px 0;
}
.shelf {
  display: flex;
  align-items: center;
  height: 24px;
  border: 1px solid #dcdcdc;
  background: #fafafa;
}
.shelf-label {
  display: flex;
  align-items: center;
  gap: 5px;
  width: 111px;
  height: 100%;
  margin-right: 1px;
  padding-left: 4px;
  border-right: 1px solid #dcdcdc;
}
.shelf .pill {
  width: 132px;
}
.view {
  flex: 1;
  border: 1px solid #c8c8c8;
  background: #fff;
}
h1 {
  padding: 10px 9px 0;
  font-size: 16px;
  line-height: 24px;
  color: #333;
}
.chart {
  margin-top: 10px;
}
.chart text {
  font-size: 11px;
  fill: #888;
}
.chart .head {
  font-size: 9px;
  fill: #333;
}

.sheet-tabs {
  display: flex;
  height: 28px;
  border-top: 1px solid #ccc;
  border-bottom: 1px solid #c8c8c8;
  background: #e6e6e6;
  font-size: 10px;
  color: #555;
}
.sheet-tabs button {
  display: flex;
  align-items: center;
  justify-content: center;
  width: 29px;
  border-right: 1px solid #ccc;
}
.sheet-tabs .source-tab {
  justify-content: flex-start;
  gap: 4px;
  width: 116px;
  padding-left: 8px;
}
.sheet-tabs .sheet {
  width: 49px;
  background: #fafafa;
}
.new svg {
  fill: none;
  stroke: #666;
}

.showme {
  position: absolute;
  top: 38px;
  right: 2px;
  display: flex;
  flex-direction: column;
  align-items: flex-end;
  width: 182px;
  filter: drop-shadow(1px 1px 1px #aaa);
}
.showme-tab {
  display: flex;
  align-items: center;
  gap: 5px;
  width: 97px;
  height: 33px;
  padding: 0 0 4px 10px;
  background: #fafafa;
  border: 1px solid #e6e6e6;
  border-bottom: 0;
  white-space: nowrap;
}
.showme-body {
  width: 100%;
  min-height: 543px;
  padding: 13px 11px;
  border-left: 1px solid #e0e0e0;
  background: #fafafa;
}
.thumbs {
  display: grid;
  grid-template-columns: repeat(3, 50px);
  gap: 4px;
}
.thumbs button {
  display: block;
  height: 37px;
  outline: 1px solid #e4e4e4;
  outline-offset: -1px;
  background: #fff;
}
.thumbs svg {
  width: 50px;
  height: 37px;
}
.thumbs .selected {
  outline: 2px solid #dc6a35;
  outline-offset: -2px;
}
.line {
  fill: none;
  stroke-width: 4;
}
.tiny {
  font-size: 12px;
  fill: #777;
  text-anchor: middle;
}
.hint {
  margin: 16px 0 4px 2px;
  line-height: 15px;
  white-space: nowrap;
}
.need {
  display: flex;
  align-items: center;
  gap: 4px;
  height: 18px;
  margin: 0 0 7px 2px;
}
.need svg {
  margin-left: 2px;
}
.need:nth-of-type(2) {
  margin-bottom: 4px;
}
.need .pill {
  margin-left: -2px;
}

.dialog {
  position: absolute;
  top: 198px;
  left: 490px;
  width: 488px;
  border: 1px solid #777;
  background: #f0f0f0;
  box-shadow: 0 3px 14px rgba(0, 0, 0, 0.4);
}
.dialog header {
  display: flex;
  align-items: center;
  justify-content: space-between;
  height: 27px;
  padding: 0 8px 0 7px;
  background: #fff;
  font-size: 10px;
}
.dialog-body {
  padding: 9px 10px 10px;
}
.format {
  display: flex;
  gap: 3px;
  height: 19px;
}
.format button {
  display: flex;
  align-items: center;
  justify-content: center;
  border: 1px solid #b0b0b0;
  background: #ddd;
}
.format select {
  padding-left: 4px;
  border: 1px solid #8a8a8a;
  background: #fff url("data:image/svg+xml,%3Csvg xmlns='http://www.w3.org/2000/svg' width='14' height='6'%3E%3Cpath d='M2 .5l4 4 4-4' fill='none' stroke='%23555'/%3E%3C/svg%3E") right center no-repeat;
}
.format .font {
  width: 130px;
  margin-right: 3px;
}
.format .size {
  width: 49px;
  margin-right: 2px;
}
.format .sq {
  width: 23px;
  font-family: "Liberation Serif", serif;
  color: #334;
}
.format .sq:nth-of-type(1) {
  font-family: "Liberation Sans", sans-serif;
}
.format .color {
  width: 35px;
  margin: 0 2px 0 1px;
}
.swatch {
  width: 19px;
  height: 13px;
  background: #333;
}
.color .caret {
  margin-left: 3px;
}
.aligns {
  display: flex;
  width: 67px;
  margin-right: 7px;
  border: 1px solid #b0b0b0;
}
.aligns button {
  flex: 1;
  border: 0;
}
.aligns .on {
  outline: 1px solid #3c94dd;
  background: #c0ddf5;
}
.aligns svg {
  stroke: #556;
}
.format .insert {
  flex: 1;
  font-size: 10px;
}
.editor {
  position: relative;
  height: 184px;
  margin-top: 4px;
  border: 1px solid #2c8ad6;
  background: #fff;
}
.token {
  position: absolute;
  left: 4px;
  top: 4px;
  width: 75px;
  height: 25px;
  border-right: 1px solid #222;
  background: #e9e9e9;
}
.editor textarea {
  position: relative;
  display: block;
  width: 100%;
  height: 100%;
  padding: 4px;
  outline: 0;
  resize: none;
  font-size: 16px;
  font-weight: 300;
  line-height: 24px;
  color: #444;
}
.actions {
  display: flex;
  justify-content: flex-end;
  gap: 7px;
  padding: 20px 1px 0;
}
.actions button {
  width: 65px;
  height: 19px;
  border: 1px solid #b0b0b0;
  background: #e1e1e1;
  font-size: 9px;
  line-height: 16px;
  color: #000;
}
.actions .reset {
  margin-right: auto;
}
.actions .ok {
  border: 2px solid #0b7ad8;
}
.grip {
  position: absolute;
  right: 3px;
  bottom: 2px;
}
</style>
